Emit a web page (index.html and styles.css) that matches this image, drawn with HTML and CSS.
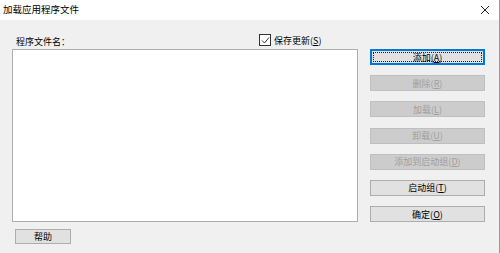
FILE: index.html
```html
<!DOCTYPE html>
<html>
<head>
<meta charset="utf-8">
<link rel="stylesheet" href="styles.css">
</head>
<body>
<div class="dialog">
  <div class="titlebar">
    <span class="title">加载应用程序文件</span>
    <svg class="close" width="10" height="10" viewBox="0 0 10 10"><path d="M1 1L9 9M9 1L1 9" stroke="#222" stroke-width="1" fill="none"/></svg>
  </div>
  <div class="content">
    <div class="left">
      <div class="header">
        <span class="label">程序文件名：</span>
        <label class="check">
          <span class="box"><svg width="9" height="9" viewBox="0 0 9 9"><path d="M1 4.5L3.5 7L8 1.5" stroke="#333" stroke-width="1" fill="none"/></svg></span>
          <span>保存更新(<u>S</u>)</span>
        </label>
      </div>
      <div class="listbox"></div>
      <div class="btn help">帮助</div>
    </div>
    <div class="right">
      <div class="btn focused"><span class="focusring">添加(<u>A</u>)</span></div>
      <div class="btn disabled">删除(<u>R</u>)</div>
      <div class="btn disabled">加载(<u>L</u>)</div>
      <div class="btn disabled">卸载(<u>U</u>)</div>
      <div class="btn disabled">添加到启动组(<u>D</u>)</div>
      <div class="btn">启动组(<u>T</u>)</div>
      <div class="btn">确定(<u>O</u>)</div>
    </div>
  </div>
</div>
</body>
</html>
```
FILE: styles.css
```css
html, body {
  margin: 0;
  padding: 0;
}
body {
  width: 500px;
  height: 253px;
  background: #f0f0f0;
  font-family: "Noto Sans CJK SC", "Noto Sans", sans-serif;
  font-size: 9px;
  color: #000;
  overflow: hidden;
}
.dialog {
  width: 499px;
  height: 253px;
  border-right: 1px solid #9a9a9a;
  display: flex;
  flex-direction: column;
}
.titlebar {
  height: 20px;
  background: #fff;
  display: flex;
  align-items: center;
  justify-content: space-between;
  padding: 0 9px 0 3px;
  flex-shrink: 0;
}
.title {
  font-size: 9.5px;
  line-height: 1;
}
.close {
  display: block;
}
.content {
  display: flex;
  padding: 13px 0 0 12px;
  gap: 12px;
}
.left {
  width: 346px;
  display: flex;
  flex-direction: column;
}
.header {
  height: 16px;
  display: flex;
  align-items: flex-start;
  position: relative;
}
.label {
  margin-left: 4px;
  margin-top: 3px;
  line-height: 11px;
}
.check {
  margin-left: 189px;
  margin-top: 1px;
  display: flex;
  align-items: center;
  gap: 3px;
  line-height: 11px;
}
.box {
  width: 10px;
  height: 10px;
  border: 1px solid #333;
  background: #fff;
  display: flex;
  align-items: center;
  justify-content: center;
}
.box svg {
  display: block;
}
.listbox {
  height: 171px;
  background: #fff;
  border: 1px solid #adadad;
}
.right {
  width: 115px;
  margin-top: 16px;
  display: flex;
  flex-direction: column;
  gap: 10.2px;
}
.btn {
  box-sizing: border-box;
  height: 16px;
  background: #e1e1e1;
  border: 1px solid #adadad;
  display: flex;
  align-items: center;
  justify-content: center;
  line-height: 1;
  color: #000;
}
.btn u {
  text-underline-offset: 1px;
}
.btn.disabled {
  background: #cccccc;
  border-color: #bfbfbf;
  color: #a0a0a0;
}
.btn.focused {
  border: 2px solid #0078d7;
  padding: 1px;
}
.focusring {
  flex: 1;
  align-self: stretch;
  display: flex;
  align-items: center;
  justify-content: center;
  border: 1px dotted #222;
}
.help {
  width: 56px;
  height: 15px;
  margin-top: 7px;
  margin-left: 3px;
}
```
